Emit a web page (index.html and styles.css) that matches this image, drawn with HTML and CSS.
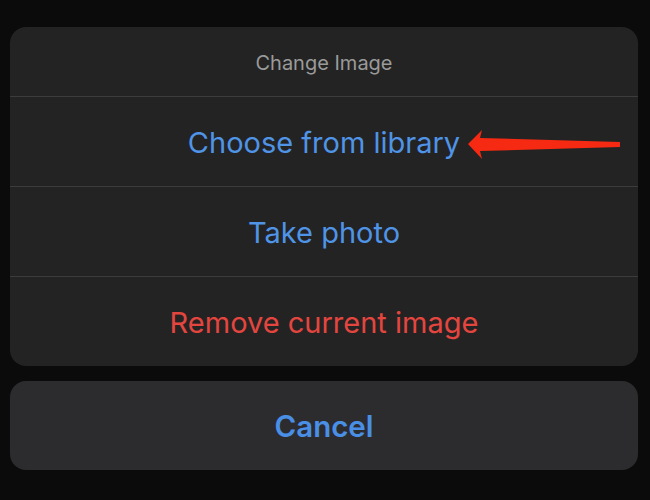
FILE: index.html
```html
<!DOCTYPE html>
<html>
<head>
<meta charset="utf-8">
<link rel="stylesheet" href="styles.css">
</head>
<body>
<div class="sheet">
  <div class="group">
    <div class="title">Change Image</div>
    <div class="row blue">
      <span>Choose from library</span>
      <svg class="arrow" width="164" height="32" viewBox="0 0 164 32">
        <polygon fill="#f62a12" points="0,15 14,1 12,9 152,13 152,18 12,22 14,30"/>
      </svg>
    </div>
    <div class="row blue">Take photo</div>
    <div class="row red">Remove current image</div>
  </div>
  <div class="cancel">Cancel</div>
</div>
</body>
</html>
```

FILE: styles.css
```css
html, body {
  margin: 0;
  padding: 0;
  background: #0b0b0b;
  width: 650px;
  height: 500px;
  overflow: hidden;
}
body {
  font-family: Inter, "Noto Sans", sans-serif;
}
.sheet {
  padding: 27px 12px 0 10px;
  display: flex;
  flex-direction: column;
  gap: 15px;
}
.group {
  background: #232323;
  border-radius: 16px;
  display: flex;
  flex-direction: column;
}
.title {
  height: 69px;
  display: flex;
  align-items: center;
  justify-content: center;
  color: #9a9a9a;
  font-size: 20px;
  padding-top: 3px;
  box-sizing: border-box;
}
.row {
  position: relative;
  height: 90px;
  box-sizing: border-box;
  border-top: 1px solid #3c3c3c;
  display: flex;
  align-items: center;
  justify-content: center;
  font-size: 29px;
  padding-top: 2px;
}
.blue { color: #4f94e6; }
.red { color: #e4463f; }
.arrow {
  position: absolute;
  left: 458px;
  top: 32px;
}
.cancel {
  height: 89px;
  background: #2c2c2e;
  border-radius: 16px;
  display: flex;
  align-items: center;
  justify-content: center;
  color: #4a8fe6;
  font-size: 29.5px;
  font-weight: 600;
  padding-top: 1px;
  box-sizing: border-box;
}
```
